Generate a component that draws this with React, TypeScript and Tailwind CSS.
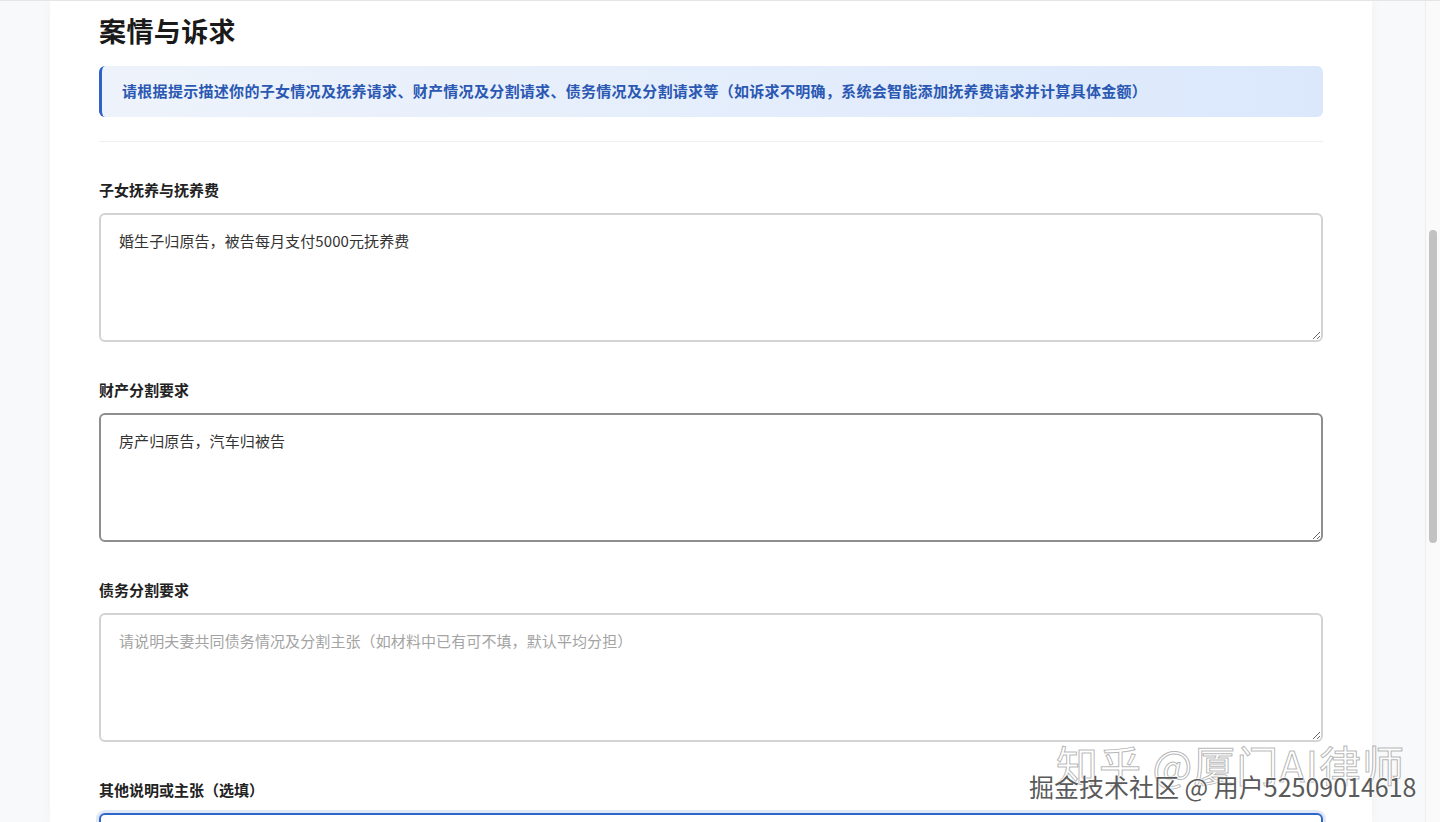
import React from "react";

const font = { fontFamily: '"Noto Sans CJK SC", "Noto Sans", sans-serif' };

function Field({
  label,
  value,
  placeholder,
  tone,
}: {
  label: string;
  value?: string;
  placeholder?: string;
  tone: "normal" | "hover" | "focus";
}) {
  const border =
    tone === "hover"
      ? "border-[#8e8e8e]"
      : tone === "focus"
      ? "border-[#2f66c9] shadow-[0_0_0_3px_rgba(47,102,201,0.15)]"
      : "border-[#d3d3d3]";
  return (
    <div className="flex flex-col">
      <label className="text-[15px] leading-[22px] font-semibold text-[#222] mb-3">{label}</label>
      <textarea
        readOnly
        defaultValue={value}
        placeholder={placeholder}
        className={`h-[129px] w-full rounded-[6px] border-2 ${border} bg-white px-[18px] py-[14px] text-[15px] leading-[24px] tracking-[0.1px] text-[#333] placeholder:text-[#a3a3a3] outline-none resize-y`}
        style={font}
      />
    </div>
  );
}

export default function App() {
  return (
    <div className="relative flex h-[822px] w-[1440px] overflow-hidden bg-[#f8f9fa] border-t border-[#e5e5e5]" style={font}>
      <div className="flex-1 flex">
        <div className="ml-[50px] w-[1322px] bg-white shadow-[0_0_12px_rgba(0,0,0,0.04)] px-[49px] pt-[12px]">
          <h1 className="text-[27px] leading-[36px] font-bold text-[#1a1a1a] tracking-[0.4px]">案情与诉求</h1>
          <div className="mt-[17px] h-[51px] flex items-center rounded-[6px] border-l-[3px] border-[#2f62c4] bg-gradient-to-r from-[#eef3fb] to-[#dbe8fc] pl-[20px]">
            <p className="text-[15px] font-semibold text-[#2a58b2] tracking-[0.3px]">
              请根据提示描述你的子女情况及抚养请求、财产情况及分割请求、债务情况及分割请求等（如诉求不明确，系统会智能添加抚养费请求并计算具体金额）
            </p>
          </div>
          <div className="mt-[24px] h-px bg-[#efefef]" />
          <div className="mt-[37px] flex flex-col gap-[37px]">
            <Field label="子女抚养与抚养费" value="婚生子归原告，被告每月支付5000元抚养费" tone="normal" />
            <Field label="财产分割要求" value="房产归原告，汽车归被告" tone="hover" />
            <Field
              label="债务分割要求"
              placeholder="请说明夫妻共同债务情况及分割主张（如材料中已有可不填，默认平均分担）"
              tone="normal"
            />
            <Field label="其他说明或主张（选填）" value="" tone="focus" />
          </div>
        </div>
      </div>
      <div className="w-[15px] border-l border-[#ececec] bg-[#fafafa] pt-[229px] flex justify-center">
        <div className="w-[8px] h-[313px] rounded-full bg-[#c2c2c2]" />
      </div>

      <div className="absolute left-[1056px] top-[738px] text-[42px] leading-[50px] text-white/70 [-webkit-text-stroke:1px_rgba(120,120,120,0.55)] tracking-[1px] pointer-events-none">
        知乎 @厦门AI律师
      </div>
      <div className="absolute left-[1029px] top-[770px] text-[25px] leading-[30px] text-[#5a5a5a] [text-shadow:0_0_2px_#fff,0_0_2px_#fff,0_0_2px_#fff] pointer-events-none">
        掘金技术社区 @ 用户52509014618
      </div>
    </div>
  );
}
